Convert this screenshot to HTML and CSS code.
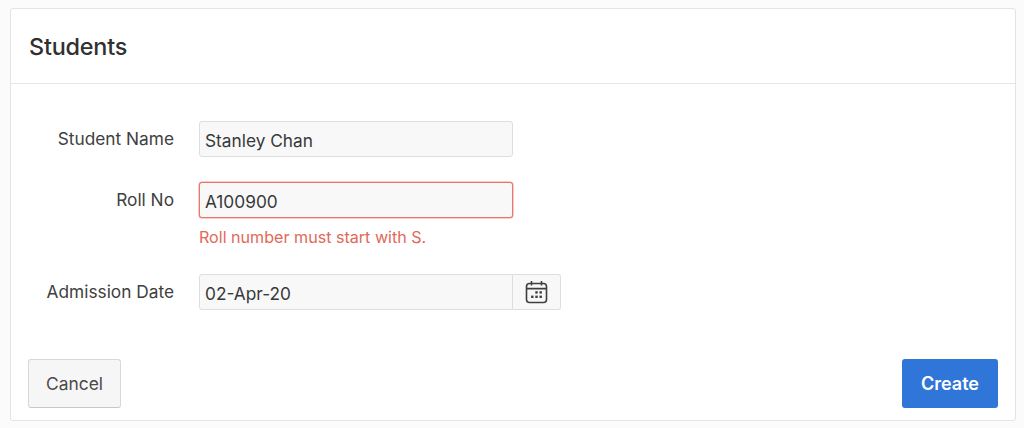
FILE: index.html
```html
<!DOCTYPE html>
<html>
<head>
  <link rel="stylesheet" href="styles.css">
</head>
<body>
  <div class="region">
    <div class="region-header">
      <h2>Students</h2>
    </div>
    <form class="region-body">
      <div class="field">
        <label for="student-name">Student Name</label>
        <div class="field-input">
          <input type="text" id="student-name" value="Stanley Chan">
        </div>
      </div>
      <div class="field field-error">
        <label for="roll-no">Roll No</label>
        <div class="field-input">
          <input type="text" id="roll-no" value="A100900">
          <span class="error">Roll number must start with S.</span>
        </div>
      </div>
      <div class="field">
        <label for="admission-date">Admission Date</label>
        <div class="field-input date-group">
          <input type="text" id="admission-date" value="02-Apr-20">
          <button type="button" class="date-button" aria-label="Calendar">
            <svg width="24" height="24" viewBox="0 0 24 24" fill="none" stroke="#3f3f3f" stroke-width="1.6">
              <rect x="1.5" y="3.5" width="20" height="19" rx="3"/>
              <path d="M1.5 8.6h20M6.5 1v4.5M16.5 1v4.5"/>
              <g fill="#3f3f3f" stroke="none">
                <rect x="10.3" y="11.2" width="2.4" height="2.4"/>
                <rect x="14.5" y="11.2" width="2.4" height="2.4"/>
                <rect x="6.1" y="15.6" width="2.4" height="2.4"/>
                <rect x="10.3" y="15.6" width="2.4" height="2.4"/>
                <rect x="14.5" y="15.6" width="2.4" height="2.4"/>
              </g>
            </svg>
          </button>
        </div>
      </div>
    </form>
    <div class="region-footer">
      <button type="button" class="btn">Cancel</button>
      <button type="button" class="btn btn-primary">Create</button>
    </div>
  </div>
</body>
</html>
```

FILE: styles.css
```css
html, body {
  height: 100%;
}
body {
  margin: 0;
  padding: 8px 8px 7px 10px;
  box-sizing: border-box;
  background-color: #fbfbfb;
  font-family: Inter, "Liberation Sans", sans-serif;
  color: #303030;
  overflow: hidden;
}
.region {
  height: 413px;
  box-sizing: border-box;
  background-color: #fff;
  border: 1px solid #e4e4e4;
  border-radius: 3px;
  display: flex;
  flex-direction: column;
}
.region-header {
  height: 75px;
  box-sizing: border-box;
  border-bottom: 1px solid #e6e6e6;
  padding: 0 18px;
  display: flex;
  align-items: center;
}
.region-header h2 {
  margin: 0;
  font-size: 23.4px;
  font-weight: 500;
  letter-spacing: -0.2px;
}
.region-body {
  flex: 1;
  padding-top: 37px;
}
.field {
  display: flex;
  margin-bottom: 25px;
}
.field label {
  width: 163px;
  padding-top: 8px;
  text-align: right;
  font-size: 17.3px;
  line-height: 20px;
  color: #404040;
}
.field-input {
  margin-left: 25px;
  width: 314px;
}
.field input {
  display: block;
  width: 100%;
  height: 36px;
  box-sizing: border-box;
  padding: 2px 5px 0;
  background-color: #f8f8f8;
  border: 1px solid #dedede;
  border-radius: 3px;
  font-family: inherit;
  font-size: 17.3px;
  color: #383838;
}
.field-error {
  margin-bottom: 26px;
}
.field-error input {
  border-color: #e8786c;
  box-shadow: 0 0 0 0.5px #eb9a90;
}
.error {
  display: block;
  margin-top: 9px;
  font-size: 16.1px;
  line-height: 21px;
  color: #e0695a;
}
.date-group {
  display: flex;
  width: 362px;
}
.date-group input {
  width: 314px;
  flex: none;
  border-radius: 3px 0 0 3px;
}
.date-button {
  width: 48px;
  height: 36px;
  flex: none;
  padding: 0;
  background-color: #f8f8f8;
  border: 1px solid #dedede;
  border-left: none;
  border-radius: 0 3px 3px 0;
  display: flex;
  align-items: center;
  justify-content: center;
}
.region-footer {
  display: flex;
  justify-content: space-between;
  padding: 0 17px 12px 17px;
}
.btn {
  height: 49px;
  width: 93px;
  background-color: #f6f6f6;
  border: 1px solid #d8d8d8;
  border-bottom-color: #c8c8c8;
  border-radius: 3px;
  font-family: inherit;
  font-size: 17.4px;
  color: #4a4a4a;
}
.btn-primary {
  width: 96px;
  background-color: #3075d8;
  border: none;
  font-size: 18px;
  font-weight: 600;
  color: #fff;
}
```
